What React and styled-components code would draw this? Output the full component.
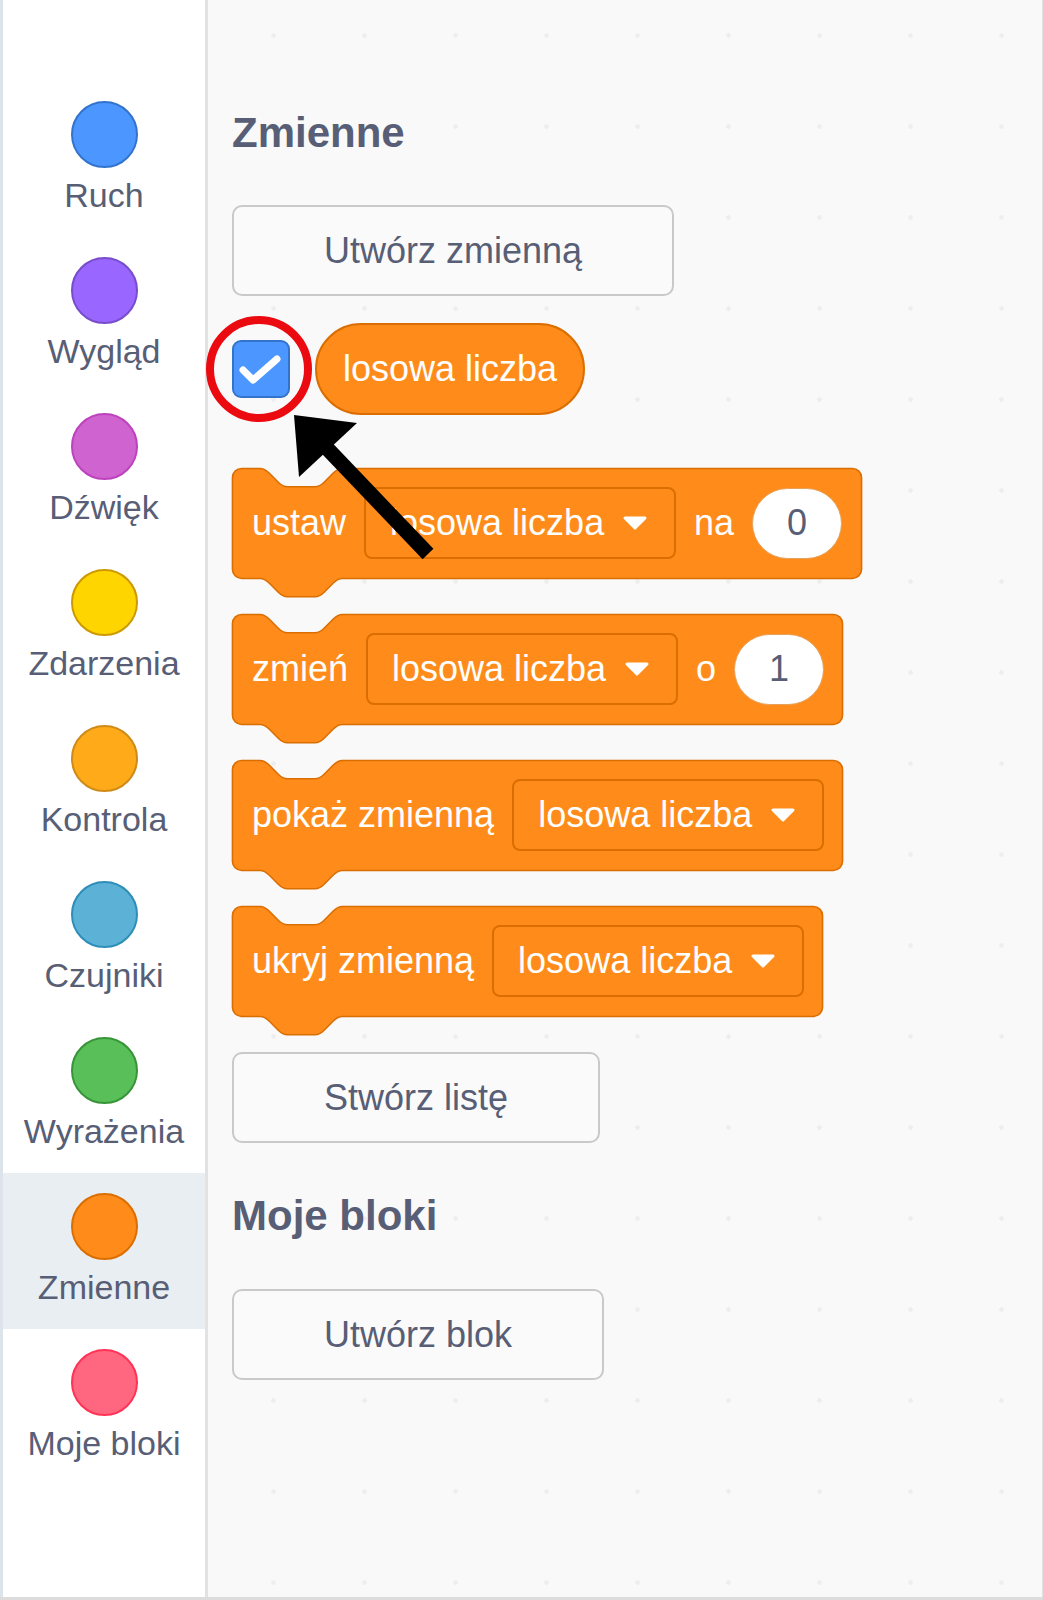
import React from "react"
import styled, { createGlobalStyle } from "styled-components"

const GlobalStyle = createGlobalStyle`
    html, body {
        margin: 0;
        padding: 0;
        background: #f9f9f9;
    }
    body {
        font-family: "Liberation Sans", Arial, sans-serif;
    }
`

const Page = styled.div`
    position: relative;
    display: flex;
    width: 1043px;
    height: 1597px;
    border-bottom: 3px solid #dcdcdc;
    overflow: hidden;
`

const Sidebar = styled.nav`
    width: 202px;
    flex-shrink: 0;
    background: #fff;
    border-left: 3px solid #dde3ea;
    border-right: 3px solid #e2e2e2;
    padding-top: 81px;
`

const Category = styled.div`
    height: 156px;
    box-sizing: border-box;
    padding-top: 20px;
    display: flex;
    flex-direction: column;
    align-items: center;
    background: ${props => props.active ? "#e9eef2" : "transparent"};
`

const Dot = styled.div`
    width: 63px;
    height: 63px;
    border-radius: 50%;
    background: ${props => props.fill};
    border: 2px solid ${props => props.edge};
`

const CatLabel = styled.div`
    margin-top: 10px;
    font-size: 34px;
    line-height: 34px;
    color: #575e75;
    white-space: nowrap;
`

const Workspace = styled.main`
    flex: 1;
    position: relative;
    background-color: #f9f9f9;
    background-image: radial-gradient(circle, #eeeeee 2px, transparent 2.6px);
    background-size: 91px 91px;
    background-position: 20px -10px;
    border-right: 1px solid #e0e0e0;
    padding-left: 24px;
    display: flex;
    flex-direction: column;
    align-items: flex-start;
`

const Heading = styled.h2`
    margin: ${props => props.mt}px 0 0 0;
    font-size: 42px;
    line-height: 42px;
    font-weight: 700;
    color: #575e75;
`

const Button = styled.button`
    margin-top: ${props => props.mt}px;
    height: 91px;
    box-sizing: border-box;
    padding: 0 90px;
    border: 2px solid #c9c9c9;
    border-radius: 10px;
    background: #fafafa;
    color: #575e75;
    font-family: "Liberation Sans", Arial, sans-serif;
    font-size: 36px;
    white-space: nowrap;
`

const ReporterRow = styled.div`
    margin-top: 27px;
    display: flex;
    align-items: center;
    gap: 25px;
`

const Checkbox = styled.div`
    position: relative;
    width: 54px;
    height: 54px;
    border-radius: 9px;
    background: #4c97ff;
    border: 2px solid #3373cc;
`

const Highlight = styled.div`
    position: absolute;
    left: -28px;
    top: -26px;
    width: 106px;
    height: 106px;
    box-sizing: border-box;
    border: 8px solid #ea0a10;
    border-radius: 50%;
`

const Reporter = styled.div`
    height: 92px;
    box-sizing: border-box;
    padding: 0 26px;
    display: flex;
    align-items: center;
    border-radius: 46px;
    background: #ff8c1a;
    border: 2px solid #db6e00;
    color: #fff;
    font-size: 36px;
    white-space: nowrap;
`

const Block = styled.div`
    position: relative;
    display: flex;
    align-items: center;
    gap: 18px;
    width: ${props => props.w}px;
    height: 110px;
    box-sizing: border-box;
    padding: 0 19px 0 20px;
    margin-top: ${props => props.mt}px;
    color: #fff;
    font-size: 36px;
`

const BlockShape = styled.svg`
    position: absolute;
    left: 0;
    top: 0;
    overflow: visible;
`

const Word = styled.span`
    position: relative;
    white-space: nowrap;
`

const Dropdown = styled.div`
    position: relative;
    width: 312px;
    height: 72px;
    box-sizing: border-box;
    padding-left: 24px;
    display: flex;
    align-items: center;
    gap: 18px;
    border: 2px solid #db6e00;
    border-radius: 8px;
    background: #ff8c1a;
    white-space: nowrap;
`

const NumberInput = styled.div`
    position: relative;
    width: 90px;
    height: 71px;
    box-sizing: border-box;
    border-radius: 36px;
    background: #fff;
    border: 1px solid #e6a15c;
    color: #575e75;
    display: flex;
    align-items: center;
    justify-content: center;
`

const Overlay = styled.svg`
    position: absolute;
    left: 0;
    top: 0;
    pointer-events: none;
`

const categories = [
    { name: "Ruch", fill: "#4c97ff", edge: "#3373cc" },
    { name: "Wygląd", fill: "#9966ff", edge: "#774dcb" },
    { name: "Dźwięk", fill: "#cf63cf", edge: "#bd42bd" },
    { name: "Zdarzenia", fill: "#ffd500", edge: "#cc9900" },
    { name: "Kontrola", fill: "#ffab19", edge: "#cf8b17" },
    { name: "Czujniki", fill: "#5cb1d6", edge: "#2e8eb8" },
    { name: "Wyrażenia", fill: "#59c059", edge: "#389438" },
    { name: "Zmienne", fill: "#ff8c1a", edge: "#db6e00", active: true },
    { name: "Moje bloki", fill: "#ff6680", edge: "#ff3355" },
]

const S = 110 / 48

const blockPath = (w) =>
    `M 0,4 A 4,4 0 0,1 4,0 H 12 c 2,0 3,1 4,2 l 4,4 c 1,1 2,2 4,2 h 12 c 2,0 3,-1 4,-2 l 4,-4 c 1,-1 2,-2 4,-2 ` +
    `H ${w - 4} a 4,4 0 0,1 4,4 v 40 a 4,4 0 0,1 -4,4 H 48 c -2,0 -3,1 -4,2 l -4,4 c -1,1 -2,2 -4,2 h -12 ` +
    `c -2,0 -3,-1 -4,-2 l -4,-4 c -1,-1 -2,-2 -4,-2 H 4 a 4,4 0 0,1 -4,-4 z`

const StackBlock = ({ w, mt, children }) => {
    const units = w / S
    return (
        <Block w={w} mt={mt}>
            <BlockShape width={w} height={130} viewBox={`0 0 ${units} ${130 / S}`}>
                <path d={blockPath(units - 0.4)} transform="translate(0.2 0.2)" fill="#ff8c1a" stroke="#db6e00" strokeWidth="0.7" />
            </BlockShape>
            {children}
        </Block>
    )
}

const Arrow = () => (
    <svg width="26" height="16" viewBox="0 0 26 16" style={{ position: "relative" }}>
        <path d="M3 3 L23 3 L13 13 Z" fill="#fff" stroke="#fff" strokeWidth="3" strokeLinejoin="round" />
    </svg>
)

const VarDropdown = () => (
    <Dropdown>
        <span>losowa liczba</span>
        <Arrow />
    </Dropdown>
)

const App = () => {
    return (
        <Page>
            <GlobalStyle />
            <Sidebar>
                {categories.map(c => (
                    <Category key={c.name} active={c.active}>
                        <Dot fill={c.fill} edge={c.edge} />
                        <CatLabel>{c.name}</CatLabel>
                    </Category>
                ))}
            </Sidebar>
            <Workspace>
                <Heading mt={112}>Zmienne</Heading>
                <Button mt={51}>Utwórz zmienną</Button>
                <ReporterRow>
                    <Checkbox>
                        <svg width="54" height="54" viewBox="0 0 54 54">
                            <path d="M9 28 L19 38 L43 17" fill="none" stroke="#fff" strokeWidth="7" strokeLinecap="round" strokeLinejoin="round" />
                        </svg>
                        <Highlight />
                    </Checkbox>
                    <Reporter>losowa liczba</Reporter>
                </ReporterRow>
                <StackBlock w={630} mt={53}>
                    <Word>ustaw</Word>
                    <VarDropdown />
                    <Word>na</Word>
                    <NumberInput>0</NumberInput>
                </StackBlock>
                <StackBlock w={611} mt={36}>
                    <Word>zmień</Word>
                    <VarDropdown />
                    <Word>o</Word>
                    <NumberInput>1</NumberInput>
                </StackBlock>
                <StackBlock w={611} mt={36}>
                    <Word>pokaż zmienną</Word>
                    <VarDropdown />
                </StackBlock>
                <StackBlock w={591} mt={36}>
                    <Word>ukryj zmienną</Word>
                    <VarDropdown />
                </StackBlock>
                <Button mt={36}>Stwórz listę</Button>
                <Heading mt={52}>Moje bloki</Heading>
                <Button mt={52}>Utwórz blok</Button>
            </Workspace>
            <Overlay width="1043" height="1600" viewBox="0 0 1043 1600">
                <line x1="322" y1="443" x2="428" y2="554" stroke="#000" strokeWidth="15" />
                <polygon points="294,415 357,423 299,477" fill="#000" />
            </Overlay>
        </Page>
    )
}

export default App
